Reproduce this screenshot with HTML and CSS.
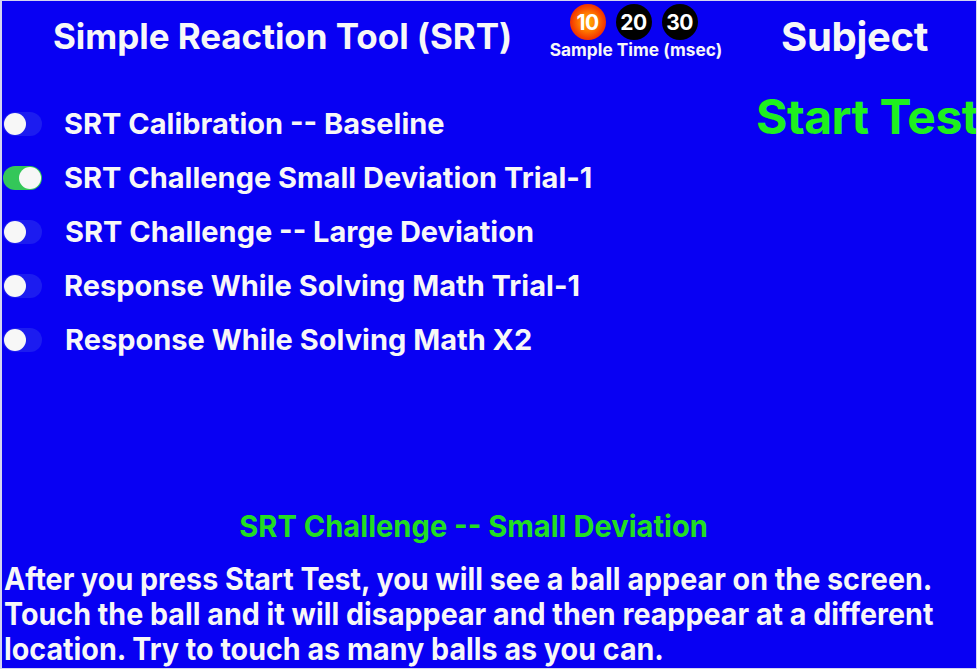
FILE: index.html
```html
<!DOCTYPE html>
<html>
<head>
<meta charset="utf-8">
<link rel="stylesheet" href="styles.css">
</head>
<body>
<div class="screen">
  <header class="top">
    <h1 class="title">Simple Reaction Tool (SRT)</h1>
    <div class="sample">
      <div class="balls">
        <span class="ball active">10</span>
        <span class="ball">20</span>
        <span class="ball">30</span>
      </div>
      <div class="sample-label">Sample Time (msec)</div>
    </div>
    <div class="subject">Subject</div>
  </header>
  <main class="main">
    <ul class="tests">
      <li class="test"><span class="toggle"><span class="knob"></span></span><span class="label">SRT Calibration -- Baseline</span></li>
      <li class="test"><span class="toggle on"><span class="knob"></span></span><span class="label">SRT Challenge Small Deviation Trial-1</span></li>
      <li class="test"><span class="toggle"><span class="knob"></span></span><span class="label shift">SRT Challenge -- Large Deviation</span></li>
      <li class="test"><span class="toggle"><span class="knob"></span></span><span class="label">Response While Solving Math Trial-1</span></li>
      <li class="test"><span class="toggle"><span class="knob"></span></span><span class="label shift">Response While Solving Math X2</span></li>
    </ul>
    <div class="start">Start Test</div>
  </main>
  <section class="info">
    <h2 class="info-title"><span class="narrow">SRT Challenge -- Small Deviation</span></h2>
    <p class="info-text"><span class="narrow-block">After you press Start Test, you will see a ball appear on the screen.<br>Touch the ball and it will disappear and then reappear at a different<br>location. Try to touch as many balls as you can.</span></p>
  </section>
</div>
</body>
</html>
```
FILE: styles.css
```css
* { box-sizing: border-box; }
html, body { margin: 0; padding: 0; }
body {
  width: 977px;
  height: 669px;
  overflow: hidden;
  background: #d4d4f0;
  font-family: Inter, "Noto Sans", "Liberation Sans", sans-serif;
  color: #f7f7f7;
}
.screen {
  width: 974px;
  height: 667px;
  margin: 1px 0 0 2px;
  background: #0800f3;
  display: flex;
  flex-direction: column;
  overflow: hidden;
}
.top {
  display: grid;
  grid-template-columns: 524px 220px 1fr;
  align-items: start;
  height: 80px;
  padding-top: 3px;
}
.title {
  margin: 12px 0 0 51px;
  font-size: 35px;
  font-weight: 700;
  line-height: 40px;
  letter-spacing: -0.05px;
  white-space: nowrap;
}
.sample {
  display: flex;
  flex-direction: column;
  align-items: center;
}
.balls {
  display: flex;
  gap: 10px;
  margin-right: 5px;
}
.ball {
  width: 36px;
  height: 36px;
  border-radius: 50%;
  background: #000;
  color: #fff;
  font-size: 21px;
  font-weight: 700;
  display: flex;
  align-items: center;
  justify-content: center;
  letter-spacing: -0.5px;
}
.ball.active {
  background: radial-gradient(circle at 50% 50%, #ffb000 0%, #ff7a00 35%, #f43a00 65%, #e81400 100%);
}
.sample-label {
  font-size: 17.3px;
  font-weight: 700;
  line-height: 20px;
  white-space: nowrap;
}
.subject {
  margin: 11px 0 0 35px;
  font-size: 40px;
  font-weight: 700;
  line-height: 44px;
  letter-spacing: -0.3px;
}
.main {
  display: flex;
  justify-content: space-between;
  align-items: flex-start;
}
.tests {
  list-style: none;
  margin: 0;
  padding: 26px 0 0 1px;
  display: flex;
  flex-direction: column;
  gap: 21px;
}
.test {
  display: flex;
  align-items: center;
  height: 33px;
}
.toggle {
  width: 39px;
  height: 24px;
  border-radius: 12px;
  background: #1c1cf0;
  padding: 1px;
  display: flex;
}
.toggle.on {
  background: #34c759;
  justify-content: flex-end;
}
.knob {
  width: 22px;
  height: 22px;
  border-radius: 50%;
  background: #f7f7f7;
}
.label {
  margin-left: 22px;
  font-size: 29px;
  font-weight: 700;
  letter-spacing: 0px;
  white-space: nowrap;
}
.label.shift { margin-left: 23px; }
.start {
  margin-top: 9px;
  margin-right: -14px;
  font-size: 48px;
  font-weight: 700;
  color: #1ef01e;
  white-space: nowrap;
  line-height: 54px;
  letter-spacing: -0.5px;
  width: 234px;
}
.info {
  margin-top: auto;
  padding-bottom: 2px;
}
.info-title {
  margin: 0 0 17px 0;
  padding-right: 30px;
  text-align: center;
  font-size: 30px;
  font-weight: 700;
  line-height: 36px;
  color: #22dd22;
}
.narrow {
  display: inline-block;
  transform: scaleX(0.97);
}
.info-text {
  margin: 0;
  padding-left: 2px;
  font-size: 31px;
  font-weight: 700;
  line-height: 35px;
  white-space: nowrap;
}
.narrow-block {
  display: inline-block;
  transform: scaleX(0.924);
  transform-origin: left center;
}
```
